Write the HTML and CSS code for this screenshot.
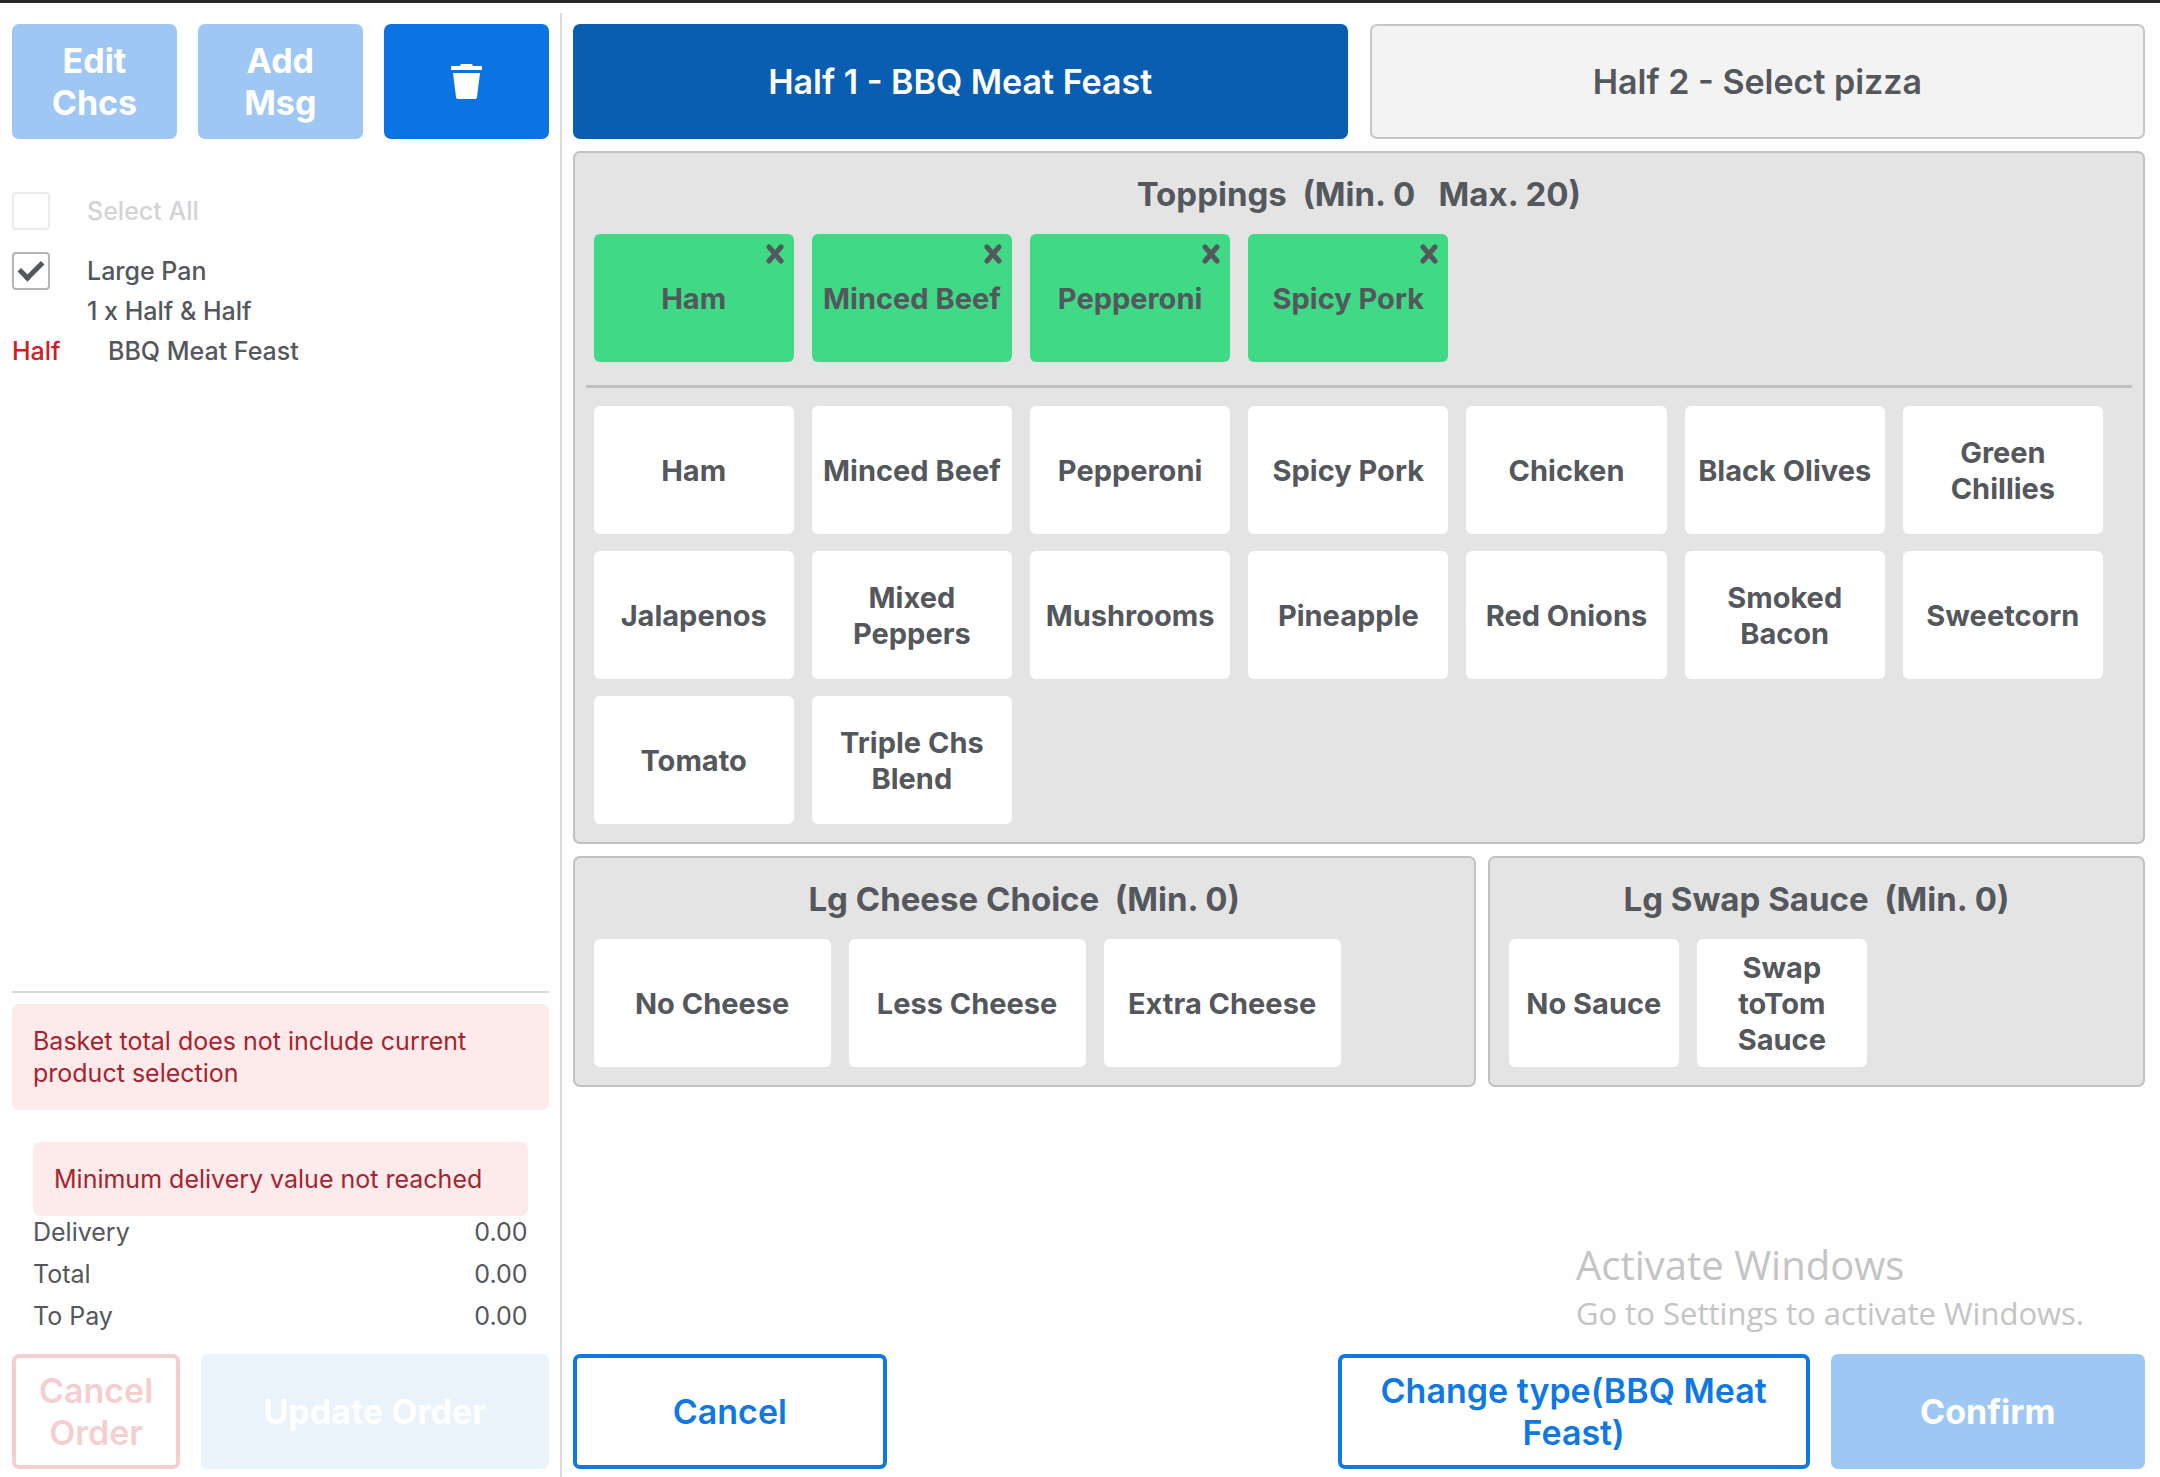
FILE: index.html
```html
<!DOCTYPE html>
<html lang="en">
<head>
    <meta charset="UTF-8">
    <meta name="viewport" content="width=device-width, initial-scale=1.0">
    <title>Half &amp; Half</title>
    <link rel="stylesheet" href="styles.css">
</head>
<body>
    <div class="app">
        <aside class="basket">
            <div class="basket-actions">
                <button class="btn btn-primary" disabled>Edit Chcs</button>
                <button class="btn btn-primary" disabled>Add Msg</button>
                <button class="btn btn-primary" aria-label="Delete">
                    <svg class="trash" viewBox="0 0 31 35" fill="currentColor">
                        <path d="M9 2 L10 0 H21 L22 2 H30 Q31 2 31 3 V6 H0 V3 Q0 2 1 2 Z"/>
                        <path d="M2 9 H29 L26 33 Q26 35 23 35 H8 Q5 35 5 33 Z"/>
                    </svg>
                </button>
            </div>

            <div class="items">
                <label class="item item-disabled">
                    <input type="checkbox" class="check" disabled>
                    <span>Select All</span>
                </label>
                <label class="item">
                    <input type="checkbox" class="check" checked>
                    <span>Large Pan</span>
                </label>
                <div class="item-line item-sub">1 x Half &amp; Half</div>
                <div class="item-line"><span class="half">Half</span>BBQ Meat Feast</div>
            </div>

            <div class="summary">
                <p class="alert">Basket total does not include current product selection</p>
                <div class="totals">
                    <p class="alert">Minimum delivery value not reached</p>
                    <table>
                        <tr><th>Delivery</th><td>0.00</td></tr>
                        <tr><th>Total</th><td>0.00</td></tr>
                        <tr><th>To Pay</th><td>0.00</td></tr>
                    </table>
                </div>
            </div>

            <div class="basket-footer">
                <button class="btn btn-danger" disabled>Cancel Order</button>
                <button class="btn btn-update" disabled>Update Order</button>
            </div>
        </aside>

        <main class="content">
            <div class="tabs">
                <button class="btn tab active">Half 1 - BBQ Meat Feast</button>
                <button class="btn tab">Half 2 - Select pizza</button>
            </div>

            <section class="panel">
                <h2>Toppings&nbsp; (Min. 0 &nbsp; Max. 20)</h2>
                <div class="options toppings">
                    <button class="option selected">Ham<svg class="remove" viewBox="0 0 18 20"><path d="M3 3 L15 17 M15 3 L3 17"/></svg></button>
                    <button class="option selected">Minced Beef<svg class="remove" viewBox="0 0 18 20"><path d="M3 3 L15 17 M15 3 L3 17"/></svg></button>
                    <button class="option selected">Pepperoni<svg class="remove" viewBox="0 0 18 20"><path d="M3 3 L15 17 M15 3 L3 17"/></svg></button>
                    <button class="option selected">Spicy Pork<svg class="remove" viewBox="0 0 18 20"><path d="M3 3 L15 17 M15 3 L3 17"/></svg></button>
                </div>
                <hr>
                <div class="options toppings">
                    <button class="option">Ham</button>
                    <button class="option">Minced Beef</button>
                    <button class="option">Pepperoni</button>
                    <button class="option">Spicy Pork</button>
                    <button class="option">Chicken</button>
                    <button class="option">Black Olives</button>
                    <button class="option">Green Chillies</button>
                    <button class="option">Jalapenos</button>
                    <button class="option">Mixed Peppers</button>
                    <button class="option">Mushrooms</button>
                    <button class="option">Pineapple</button>
                    <button class="option">Red Onions</button>
                    <button class="option">Smoked Bacon</button>
                    <button class="option">Sweetcorn</button>
                    <button class="option">Tomato</button>
                    <button class="option">Triple Chs Blend</button>
                </div>
            </section>

            <div class="panel-row">
                <section class="panel panel-cheese">
                    <h2>Lg Cheese Choice&nbsp; (Min. 0)</h2>
                    <div class="options cheeses">
                        <button class="option">No Cheese</button>
                        <button class="option">Less Cheese</button>
                        <button class="option">Extra Cheese</button>
                    </div>
                </section>
                <section class="panel panel-sauce">
                    <h2>Lg Swap Sauce&nbsp; (Min. 0)</h2>
                    <div class="options sauces">
                        <button class="option">No Sauce</button>
                        <button class="option">Swap toTom Sauce</button>
                    </div>
                </section>
            </div>

            <div class="content-footer">
                <button class="btn btn-outline">Cancel</button>
                <button class="btn btn-outline btn-wide">Change type(BBQ Meat Feast)</button>
                <button class="btn btn-primary" disabled>Confirm</button>
            </div>
        </main>
    </div>

    <div class="watermark">
        <div class="watermark-title">Activate Windows</div>
        <div>Go to Settings to activate Windows.</div>
    </div>
</body>
</html>
```

FILE: styles.css
```css
* {
    box-sizing: border-box;
}
body {
    margin: 0;
    background: #fefefe;
    color: #54575c;
    font-family: Inter, "Liberation Sans", sans-serif;
    font-size: 25px;
    line-height: 32px;
}
button {
    font-family: inherit;
    color: inherit;
    cursor: pointer;
}
.app {
    display: flex;
    min-height: 100vh;
    border-top: 3px solid #262626;
}

/* buttons */
.btn {
    height: 115px;
    padding: 0 24px;
    border: 0;
    border-radius: 7px;
    font-size: 34px;
    font-weight: 600;
    line-height: 42px;
}
.btn-primary {
    background: #0974e2;
    color: #fff;
    font-weight: 700;
}
.btn-primary:disabled {
    background: #9ec8f3;
}
.btn-outline {
    background: #fff;
    border: 4px solid #0f78e3;
    color: #0f78e3;
}
.btn-danger {
    background: #fff;
    border: 4px solid #f5cfd0;
    color: #f5cfd0;
    padding: 0 12px;
}
.btn-update {
    background: #eaf2fc;
    color: #fff;
    font-weight: 700;
}

/* basket */
.basket {
    display: flex;
    flex-direction: column;
    flex: 0 0 26%;
    margin-top: 10px;
    padding: 11px 11px 8px 12px;
    border-right: 2px solid #dcdcdc;
}
.basket-actions {
    display: flex;
    gap: 21px;
}
.basket-actions .btn {
    flex: 1;
}
.trash {
    display: block;
    width: 31px;
    height: 35px;
    margin: 0 auto;
}
.items {
    flex: 1;
    margin-top: 52px;
    font-weight: 500;
}
.item {
    display: flex;
    align-items: center;
    gap: 37px;
    height: 40px;
    margin-bottom: 20px;
}
.item + .item {
    margin-bottom: 0;
}
.item-disabled {
    opacity: 0.25;
}
.check {
    appearance: none;
    display: flex;
    align-items: center;
    justify-content: center;
    width: 38px;
    height: 38px;
    margin: 0;
    border: 2px solid #b4b4b4;
    border-radius: 4px;
}
.check:checked::before {
    content: "";
    box-sizing: border-box;
    width: 24px;
    height: 14px;
    margin-top: -7px;
    border-left: 5px solid #54575c;
    border-bottom: 5px solid #54575c;
    transform: rotate(-45deg);
}
.item-line {
    display: flex;
    line-height: 40px;
}
.item-sub {
    padding-left: 75px;
}
.half {
    width: 96px;
    color: #cd2028;
}
.summary {
    padding-top: 11px;
    border-top: 2px solid #d8d8d8;
}
.alert {
    margin: 0;
    padding: 21px;
    border-radius: 7px;
    background: #fdebec;
    color: #a5242f;
}
.totals {
    padding: 32px 21px 0;
}
.totals table {
    width: 100%;
    border-collapse: collapse;
}
.totals th,
.totals td {
    padding: 0 0 10px;
    text-align: left;
    font-weight: 400;
}
.totals td {
    text-align: right;
}
.basket-footer {
    display: flex;
    gap: 21px;
    margin-top: 12px;
}
.btn-danger {
    flex: 0 0 168px;
}
.btn-update {
    flex: 1;
}

/* content */
.content {
    display: flex;
    flex-direction: column;
    flex: 1;
    gap: 12px;
    padding: 21px 15px 8px 11px;
}
.tabs {
    display: flex;
    gap: 22px;
}
.tab {
    flex: 1;
    background: #f3f3f3;
    border: 2px solid #c6c6c6;
}
.tab.active {
    background: #0a5eb1;
    border-color: #0a5eb1;
    color: #fff;
}
.panel {
    padding: 17px 19px 18px;
    border: 2px solid #c0c1c3;
    border-radius: 7px;
    background: #e4e4e4;
}
.panel h2 {
    margin: 0 0 16px;
    text-align: center;
    font-size: 33px;
    font-weight: 700;
    line-height: 48px;
}
.panel hr {
    height: 3px;
    margin: 23px -8px 18px;
    border: 0;
    background: #bfc0c2;
}
.panel-row {
    display: flex;
    gap: 12px;
}
.panel-cheese {
    flex: 7;
}
.panel-sauce {
    flex: 5;
}
.options {
    display: grid;
    gap: 17px 18px;
}
.toppings {
    grid-template-columns: repeat(7, 1fr);
    padding-right: 21px;
}
.cheeses {
    grid-template-columns: repeat(3, 237px);
}
.sauces {
    grid-template-columns: repeat(2, 170px);
}
.option {
    position: relative;
    height: 128px;
    padding: 2px 8px 0;
    border: 0;
    border-radius: 6px;
    background: #fff;
    font-size: 29px;
    font-weight: 700;
    line-height: 36px;
}
.option.selected {
    background: #40d986;
}
.remove {
    position: absolute;
    top: 10px;
    right: 10px;
    width: 18px;
    height: 20px;
    fill: none;
    stroke: #54575c;
    stroke-width: 5;
    stroke-linecap: round;
}
.content-footer {
    display: flex;
    gap: 21px;
    margin-top: auto;
}
.content-footer .btn {
    flex: 0 0 20%;
}
.content-footer .btn-wide {
    flex-basis: 30%;
    margin-left: auto;
}

/* system notice over the page */
.watermark {
    position: absolute;
    right: 76px;
    bottom: 144px;
    color: #c4c4c4;
    font-family: "Open Sans", "Noto Sans", sans-serif;
    font-size: 31px;
    line-height: 40px;
}
.watermark-title {
    font-size: 40px;
    line-height: 56px;
}
```
